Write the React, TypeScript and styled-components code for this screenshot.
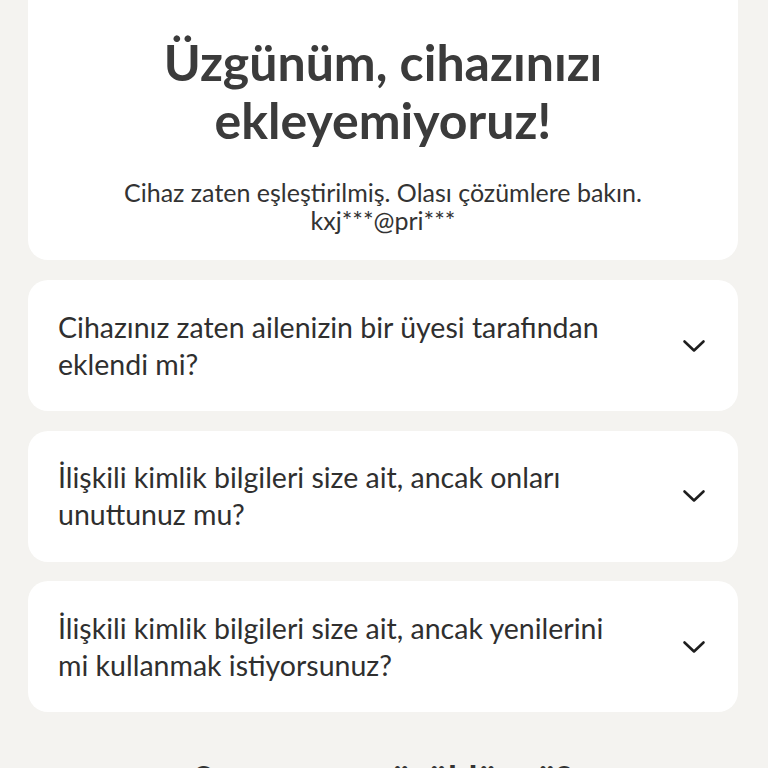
import React from "react";
import styled, { createGlobalStyle } from "styled-components";

const GlobalStyle = createGlobalStyle`
  html, body {
    margin: 0;
    padding: 0;
    background: #f4f3f0;
  }
  body {
    font-family: Lato, "Noto Sans", "Liberation Sans", sans-serif;
    color: #333;
    overflow: hidden;
  }
  * { box-sizing: border-box; }
`;

const Page = styled.main`
  display: flex;
  flex-direction: column;
  gap: 20px;
  padding: 0 30px 40px 28px;
  min-height: 768px;
`;

const HeroCard = styled.section`
  background: #fff;
  border-radius: 20px;
  margin-top: -30px;
  padding: 63px 30px 26px;
  display: flex;
  flex-direction: column;
  align-items: center;
  text-align: center;
`;

const Title = styled.h1`
  margin: 0;
  font-size: 50px;
  line-height: 58px;
  font-weight: 700;
  color: #3b3b3b;
  max-width: 520px;
`;

const Subtitle = styled.p`
  margin: 29px 0 0;
  font-size: 25px;
  line-height: 28px;
  color: #333;
`;

const List = styled.div`
  display: flex;
  flex-direction: column;
  gap: 19.5px;
`;

const QuestionCard = styled.button`
  display: flex;
  align-items: center;
  gap: 52px;
  width: 100%;
  background: #fff;
  border: 0;
  border-radius: 20px;
  padding: 28.5px 32px 28.5px 30px;
  text-align: left;
  font-family: inherit;
  cursor: pointer;
`;

const QuestionText = styled.span`
  flex: 1;
  font-size: 28.5px;
  line-height: 37px;
  color: #2f2f2f;
`;

const ChevronBox = styled.span`
  flex: none;
  width: 24px;
  height: 24px;
  display: flex;
  align-items: center;
  justify-content: center;
  color: #1e1e1e;
`;

const BottomHeading = styled.h2`
  margin: 24px 0 0;
  text-align: center;
  font-size: 36px;
  line-height: 44px;
  font-weight: 700;
  color: #333;
`;

const Chevron = () => (
  <svg width="24" height="24" viewBox="0 0 24 24" fill="none">
    <path
      d="M2.5 7.5 L12 16.5 L21.5 7.5"
      stroke="currentColor"
      strokeWidth="2.6"
      strokeLinecap="round"
      strokeLinejoin="round"
    />
  </svg>
);

const questions = [
  "Cihazınız zaten ailenizin bir üyesi tarafından eklendi mi?",
  "İlişkili kimlik bilgileri size ait, ancak onları unuttunuz mu?",
  "İlişkili kimlik bilgileri size ait, ancak yenilerini mi kullanmak istiyorsunuz?",
];

export default function App() {
  return (
    <>
      <GlobalStyle />
      <Page>
        <HeroCard>
          <Title>Üzgünüm, cihazınızı ekleyemiyoruz!</Title>
          <Subtitle>
            Cihaz zaten eşleştirilmiş. Olası çözümlere bakın.
            <br />
            kxj***@pri***
          </Subtitle>
        </HeroCard>
        <List>
          {questions.map((q) => (
            <QuestionCard key={q} type="button">
              <QuestionText>{q}</QuestionText>
              <ChevronBox>
                <Chevron />
              </ChevronBox>
            </QuestionCard>
          ))}
        </List>
        <BottomHeading>Sorununuz çözüldü mü?</BottomHeading>
      </Page>
    </>
  );
}
